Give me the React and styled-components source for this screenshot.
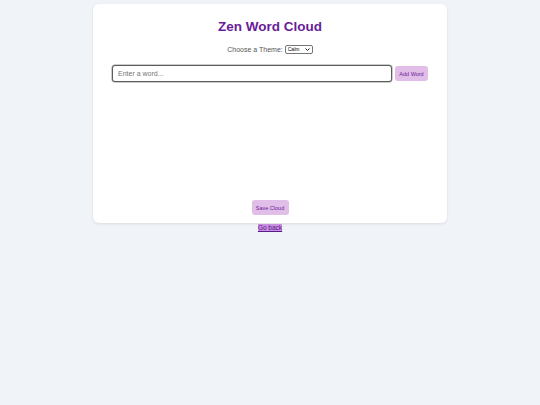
import React, { useState } from "react";
import styled, { createGlobalStyle } from "styled-components";

const Global = createGlobalStyle`
  html, body { margin: 0; padding: 0; background: #f0f3f7; }
  body { font-family: "Liberation Sans", Arial, sans-serif; }
  * { box-sizing: border-box; }
`;

const Page = styled.div`
  display: flex;
  flex-direction: column;
  align-items: center;
  padding-top: 4px;
  min-height: 405px;
`;

const Card = styled.div`
  width: 354px;
  background: #ffffff;
  border-radius: 6px;
  box-shadow: 0 1px 3px rgba(0, 0, 0, 0.1);
  padding: 15px 19px 8px;
  display: flex;
  flex-direction: column;
  align-items: center;
`;

const Title = styled.h1`
  margin: 0;
  font-size: 13.5px;
  line-height: 16px;
  font-weight: 700;
  color: #6a1b9a;
`;

const ThemeRow = styled.div`
  margin-top: 10px;
  display: flex;
  align-items: center;
  gap: 2px;
  height: 9px;
  font-size: 7px;
  color: #555;
`;

const SelectWrap = styled.span`
  position: relative;
  display: inline-flex;
`;

const Select = styled.select`
  appearance: none;
  -webkit-appearance: none;
  width: 28px;
  height: 9px;
  font-size: 5px;
  line-height: 7px;
  font-family: "Liberation Sans", Arial, sans-serif;
  padding: 0 0 0 2px;
  border: 1px solid #767676;
  border-radius: 2px;
  background: #fff;
  color: #000;
`;

const Chevron = styled.svg`
  position: absolute;
  right: 3px;
  top: 3px;
  width: 5px;
  height: 3px;
  pointer-events: none;
`;

const InputRow = styled.div`
  margin-top: 11px;
  width: 100%;
  display: flex;
  align-items: center;
  gap: 3px;
`;

const WordInput = styled.input`
  flex: 1;
  height: 17px;
  border: 1px solid #5c5c5c;
  border-radius: 3px;
  box-shadow: 0 0 0 0.5px #9a9a9a;
  padding: 0 5px;
  font-size: 7px;
  font-family: "Liberation Sans", Arial, sans-serif;
  color: #333;
  outline: none;
  &::placeholder { color: #757575; }
`;

const Button = styled.button`
  height: 15px;
  padding: 0;
  width: ${(p) => p.$w}px;
  border: none;
  border-radius: 3px;
  background: #e1bee7;
  color: #6a1b9a;
  font-size: 5.5px;
  font-family: "Liberation Sans", Arial, sans-serif;
  cursor: pointer;
`;

const CloudArea = styled.div`
  width: 100%;
  height: 118px;
`;

const BackLink = styled.a`
  margin-top: 1px;
  font-size: 6.5px;
  line-height: 8px;
  color: #5a1a8a;
  background: #c990e0;
  text-decoration: underline;
`;

export default function App() {
  const [theme, setTheme] = useState("Calm");
  return (
    <>
      <Global />
      <Page>
        <Card>
          <Title>Zen Word Cloud</Title>
          <ThemeRow>
            <span>Choose a Theme:</span>
            <SelectWrap>
              <Select value={theme} onChange={(e) => setTheme(e.target.value)}>
                <option>Calm</option>
                <option>Nature</option>
                <option>Ocean</option>
              </Select>
              <Chevron viewBox="0 0 5 3">
                <path d="M0.5 0.5 L2.5 2.5 L4.5 0.5" fill="none" stroke="#222" strokeWidth="1" />
              </Chevron>
            </SelectWrap>
          </ThemeRow>
          <InputRow>
            <WordInput placeholder="Enter a word..." />
            <Button $w={33}>Add Word</Button>
          </InputRow>
          <CloudArea />
          <Button $w={37}>Save Cloud</Button>
        </Card>
        <BackLink href="#">Go back</BackLink>
      </Page>
    </>
  );
}
